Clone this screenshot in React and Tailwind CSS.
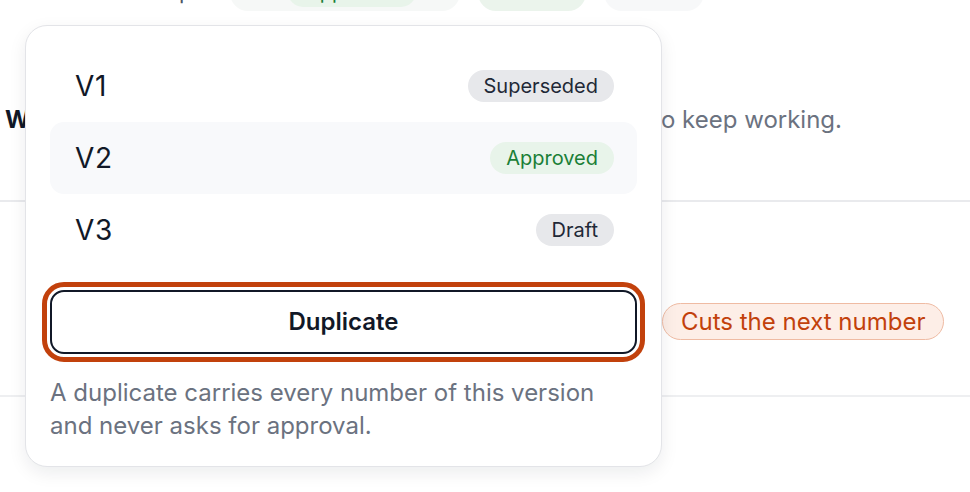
const versions = [
  { id: "V1", status: "Superseded", tone: "gray" },
  { id: "V2", status: "Approved", tone: "green", active: true },
  { id: "V3", status: "Draft", tone: "gray" },
];

const badgeTone = {
  gray: "bg-[#e7e8eb] text-[#1f2937]",
  green: "bg-[#e8f4ea] text-[#1a7f37]",
};

const StatusBadge = ({ tone, children }) => (
  <span
    className={`rounded-full px-[16px] h-[32px] flex items-center text-[20px] leading-none ${badgeTone[tone]}`}
  >
    {children}
  </span>
);

const VersionRow = ({ version }) => (
  <div
    className={`h-[72px] pl-[25px] pr-[23px] rounded-[14px] flex items-center justify-between ${
      version.active ? "bg-[#f8f9fb]" : ""
    }`}
  >
    <span className="text-[28px] text-[#111827] tracking-wide">{version.id}</span>
    <StatusBadge tone={version.tone}>{version.status}</StatusBadge>
  </div>
);

const App = () => {
  return (
    <div className="relative h-[492px] w-[970px] overflow-hidden bg-white font-['Inter',sans-serif]">
      {/* page behind the popover, mostly scrolled off */}
      <div className="h-[12px] overflow-hidden flex items-end gap-[18px] pl-[2px]">
        <span className="w-[210px] mb-[10px] text-[22px] leading-[22px] text-[#4b5563] whitespace-nowrap">
          Status in this scope
        </span>
        <div className="mb-[1px] h-[36px] w-[230px] rounded-full bg-[#f6f8f7] flex items-end pb-[4px] pl-[58px]">
          <span className="h-[30px] px-[18px] rounded-full bg-[#e8f4ea] text-[#1a7f37] text-[20px] leading-[20px] flex items-end pb-[5px]">
            Approved
          </span>
        </div>
        <span className="mb-[1px] h-[36px] w-[108px] rounded-full bg-[#ebf4ec] text-[#1a7f37] text-[20px] flex items-start justify-center leading-[22px]">
          Locked
        </span>
        <span className="mb-[1px] h-[36px] w-[100px] rounded-full bg-[#f7f8f9] text-[#6b7280] text-[20px] flex items-start justify-center leading-[22px]">
          V3
        </span>
      </div>

      <div className="mt-[90px] h-[36px] flex items-center text-[24px] whitespace-nowrap">
        <span className="pl-[5px] font-bold text-[#111827]">Work on V2</span>
        <span className="ml-auto mr-[128px] text-[#6b7280]">
          Approved work is locked. Duplicate it to keep working.
        </span>
      </div>

      <div className="mt-[62px] h-[2px] bg-[#e9eaed]" />

      <div className="mt-[101px] flex">
        <span className="ml-[662px] h-[37px] px-[18px] rounded-full border-[1.5px] border-[#efbba3] bg-[#fdeee7] text-[#c2410c] text-[24px] flex items-center whitespace-nowrap">
          Cuts the next number
        </span>
      </div>

      <div className="mt-[55px] h-[2px] bg-[#eeeff1]" />

      {/* version popover */}
      <div className="absolute left-[25px] top-[25px] w-[637px] rounded-[22px] border border-[#e3e4e8] bg-white p-[24px] shadow-[0_6px_18px_rgba(17,24,39,0.08)]">
        <div className="flex flex-col">
          {versions.map((v) => (
            <VersionRow key={v.id} version={v} />
          ))}
        </div>

        <button className="mt-[24px] h-[64px] w-full rounded-[14px] border-2 border-[#111827] bg-white text-[24px] font-semibold text-[#111827] outline-[5px] outline-solid outline-offset-[3px] outline-[#c2410c]">
          Duplicate
        </button>

        <p className="mt-[22px] text-[24px] leading-[33px] text-[#6b7280]">
          A duplicate carries every number of this version
          <br />
          and never asks for approval.
        </p>
      </div>
    </div>
  );
};

export default App;
